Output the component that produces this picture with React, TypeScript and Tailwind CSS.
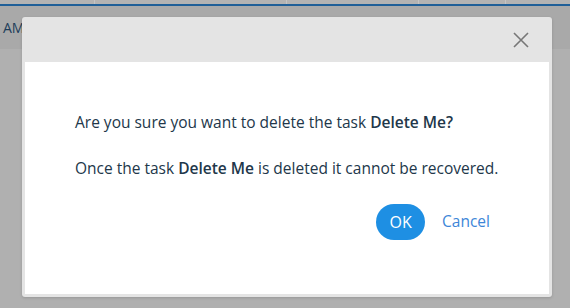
export default function App() {
  return (
    <div className="relative w-[570px] h-[308px] overflow-hidden bg-[#b0b0b0] font-['Open_Sans',sans-serif]">
      <div className="flex h-[4px] bg-[#b3b3b3]">
        <div className="w-[95px] border-r border-[#c4c4c4]" />
        <div className="w-[192px] border-r border-[#c4c4c4]" />
        <div className="w-[132px] border-r border-[#c4c4c4]" />
        <div className="w-[87px] border-r border-[#c4c4c4]" />
      </div>
      <div className="h-[2px] bg-[#1f5f98]" />
      <div className="flex h-[43px] items-center bg-[#a9a9a9] pl-[3px] pb-[1px] text-[14px] text-[#1e3d5a]">
        AMS
      </div>

      <div className="absolute left-[22px] top-[17px] flex h-[280px] w-[530px] flex-col rounded-[3px] bg-[#e4e4e4] p-[3px] pt-0 shadow-[0_1px_3px_rgba(0,0,0,0.15)]">
        <div className="flex h-[45px] items-center justify-end pr-[20px]">
          <svg width="16" height="16" viewBox="0 0 16 16" className="text-[#777]">
            <path d="M1 1 L15 15 M15 1 L1 15" stroke="currentColor" strokeWidth="1.6" fill="none" />
          </svg>
        </div>
        <div className="flex flex-1 flex-col bg-white pl-[50px] pt-[47px] text-[15.5px] text-[#22374a]">
          <p className="leading-[26px]">
            Are you sure you want to delete the task <span className="font-semibold">Delete Me?</span>
          </p>
          <p className="mt-[20px] leading-[26px]">
            Once the task <span className="font-semibold">Delete Me</span> is deleted it cannot be recovered.
          </p>
          <div className="mt-[23px] flex items-center justify-end gap-[17px] pr-[59px]">
            <button className="h-[36px] w-[49px] rounded-full bg-[#1e8fe3] text-[16px] text-white">OK</button>
            <button className="text-[15.5px] text-[#3d86d8]">Cancel</button>
          </div>
        </div>
      </div>
    </div>
  );
}
